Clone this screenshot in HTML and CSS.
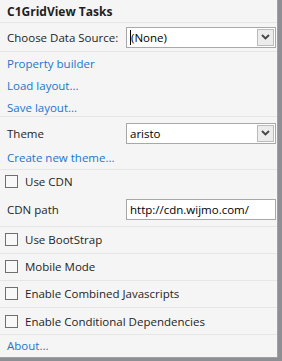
FILE: index.html
```html
<!DOCTYPE html>
<html>
 <head>
  <title>C1GridView Tasks</title>
  <link rel="stylesheet" href="styles.css">
 </head>
<body>
<div class="panel">
 <div class="title">C1GridView Tasks</div>

 <div class="group">
  <div class="field">
   <span class="label">Choose Data Source:</span>
   <div class="combo"><span class="caret"></span>(None)<span class="drop"><svg width="9" height="6" viewBox="0 0 9 6"><path d="M1 1 L4.5 4.5 L8 1" fill="none" stroke="#444" stroke-width="1.8"/></svg></span></div>
  </div>
 </div>

 <div class="group links">
  <a class="link" href="#">Property builder</a>
  <a class="link" href="#">Load layout...</a>
  <a class="link" href="#">Save layout...</a>
 </div>

 <div class="group theme">
  <div class="field">
   <span class="label">Theme</span>
   <div class="combo">aristo<span class="drop"><svg width="9" height="6" viewBox="0 0 9 6"><path d="M1 1 L4.5 4.5 L8 1" fill="none" stroke="#444" stroke-width="1.8"/></svg></span></div>
  </div>
  <a class="link" href="#">Create new theme...</a>
 </div>

 <div class="group cdn">
  <label class="check"><span class="box"></span>Use CDN</label>
  <div class="field tall">
   <span class="label">CDN path</span>
   <div class="text">http://cdn.wijmo.com/</div>
  </div>
 </div>

 <div class="group opt"><label class="check"><span class="box"></span>Use BootStrap</label></div>
 <div class="group opt"><label class="check"><span class="box"></span>Mobile Mode</label></div>
 <div class="group opt wide"><label class="check"><span class="box"></span>Enable Combined Javascripts</label></div>
 <div class="group opt"><label class="check"><span class="box"></span>Enable Conditional Dependencies</label></div>

 <div class="group last">
  <a class="link" href="#">About...</a>
 </div>
</div>
</body>
</html>
```

FILE: styles.css
```css
html, body {
 margin: 0;
 padding: 0;
 background: #8d8f94;
}
body {
 width: 282px;
 height: 361px;
 font-family: "Open Sans", "Noto Sans", sans-serif;
 font-size: 11.5px;
 color: #1e1e1e;
}
.panel {
 width: 277px;
 height: 357px;
 background: #f5f5f5;
 border-right: 1px solid #a0a0a0;
 border-bottom: 1px solid #a0a0a0;
 display: flex;
 flex-direction: column;
}
.title {
 height: 22px;
 line-height: 23px;
 padding-left: 7px;
 font-weight: bold;
 font-size: 12px;
 border-bottom: 1px solid #e6e6e6;
}
.group {
 display: flex;
 flex-direction: column;
 border-bottom: 1px solid #e6e6e6;
}
.group.last {
 border-bottom: 0;
}
.links {
 height: 65px;
 padding-top: 1px;
 box-sizing: border-box;
}
.theme {
 height: 52px;
 padding-top: 2px;
 box-sizing: content-box;
 height: 50px;
}
.cdn {
 height: 56px;
}
.opt {
 height: 26px;
 justify-content: center;
}
.opt.wide {
 height: 27px;
}
.field {
 display: flex;
 align-items: center;
 height: 28px;
 flex-shrink: 0;
}
.field.tall {
 height: 34px;
}
.label {
 width: 119px;
 padding-left: 7px;
}
.combo, .text {
 position: relative;
 width: 145px;
 height: 19px;
 line-height: 19px;
 padding-left: 3px;
 background: #fff;
 border: 1px solid #a8a8a8;
 color: #000;
}
.caret {
 display: inline-block;
 width: 1px;
 height: 15px;
 background: #000;
 vertical-align: -3px;
}
.drop {
 position: absolute;
 right: 1px;
 top: 1px;
 width: 15px;
 height: 15px;
 border: 1px solid #bcbcbc;
 background: #ececec;
 display: flex;
 align-items: center;
 justify-content: center;
}
.link {
 display: block;
 height: 22px;
 line-height: 22px;
 padding-left: 7px;
 color: #1e74cc;
 text-decoration: none;
 flex-shrink: 0;
}
.check {
 display: flex;
 align-items: center;
 height: 22px;
 padding-left: 5px;
 flex-shrink: 0;
}
.box {
 width: 11px;
 height: 11px;
 border: 1px solid #6f6f6f;
 background: #f8f8f8;
 margin-right: 7px;
}
```
